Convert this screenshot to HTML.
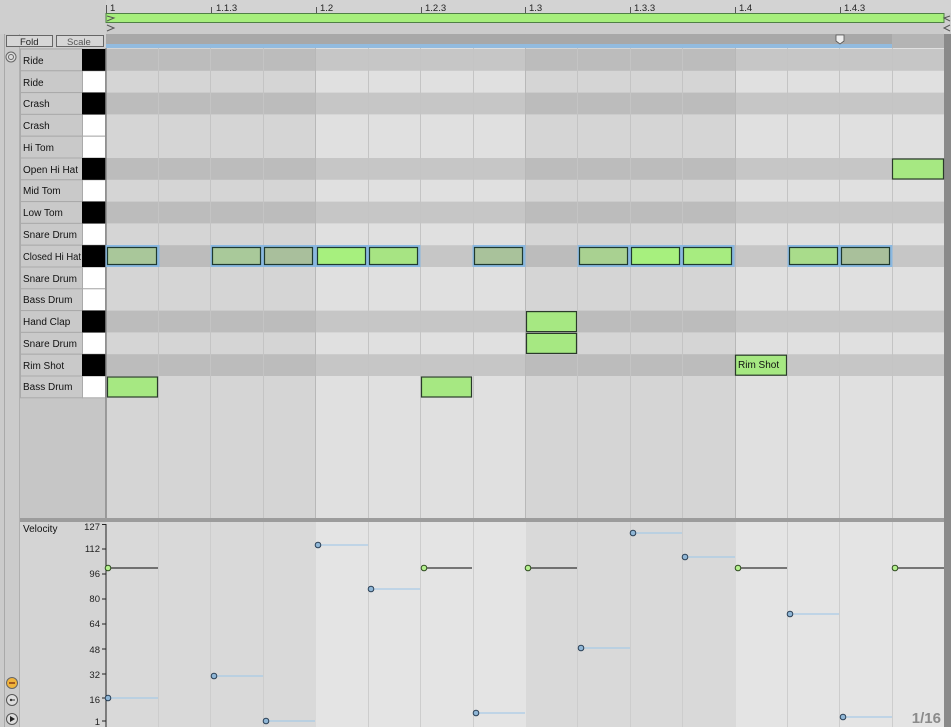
<!DOCTYPE html>
<html><head><meta charset="utf-8"><style>
html,body{margin:0;padding:0;background:#cfcfcf;}
svg{display:block;font-family:"Liberation Sans",sans-serif;}
</style></head><body>
<svg width="951" height="727" viewBox="0 0 951 727" xmlns="http://www.w3.org/2000/svg">
<rect x="0" y="0" width="951" height="727" fill="#cfcfcf"/>
<rect x="0" y="34" width="20" height="693" fill="#cbcbcb"/>
<line x1="4.5" y1="34" x2="4.5" y2="727" stroke="#a9a9a9"/>
<line x1="19.5" y1="34" x2="19.5" y2="727" stroke="#b0b0b0"/>
<rect x="106" y="0" width="845" height="13" fill="#d3d3d3"/>
<g fill="#222" font-size="9.5">
<text x="110" y="11">1</text><text x="216" y="11">1.1.3</text><text x="320" y="11">1.2</text>
<text x="425" y="11">1.2.3</text><text x="529" y="11">1.3</text><text x="634" y="11">1.3.3</text>
<text x="739" y="11">1.4</text><text x="844" y="11">1.4.3</text></g>
<g stroke="#555"><line x1="106.5" y1="5" x2="106.5" y2="13"/><line x1="211.5" y1="7" x2="211.5" y2="13"/><line x1="316.5" y1="7" x2="316.5" y2="13"/><line x1="421.5" y1="7" x2="421.5" y2="13"/><line x1="525.5" y1="7" x2="525.5" y2="13"/><line x1="630.5" y1="7" x2="630.5" y2="13"/><line x1="735.5" y1="7" x2="735.5" y2="13"/><line x1="840.5" y1="7" x2="840.5" y2="13"/></g>
<rect x="106" y="13.5" width="838" height="9" fill="#a6ee7c" stroke="#4f7f45"/>
<rect x="106" y="23" width="838" height="11" fill="#cbcbcb"/>
<path d="M107 16 L114 18 L107 21" fill="none" stroke="#555"/>
<path d="M107 25 L114 28 L107 31" fill="none" stroke="#555"/>
<rect x="106" y="34" width="845" height="14" fill="#a8a8a8"/>
<rect x="106" y="44" width="786" height="4" fill="#92bbdf"/>
<rect x="892" y="34" width="52" height="14" fill="#b4b4b4"/>
<path d="M836 35 h8 v6 l-4 3 l-4 -3 z" fill="#eee" stroke="#555" stroke-width="0.8"/>
<rect x="6.5" y="35.5" width="46" height="11" fill="#d6d6d6" stroke="#666"/>
<text x="20" y="45" font-size="9.5" fill="#222">Fold</text>
<rect x="56.5" y="35.5" width="47" height="11" fill="#d6d6d6" stroke="#666"/>
<text x="67" y="45" font-size="9.5" fill="#555">Scale</text>
<rect x="106" y="48" width="210" height="471" fill="#d5d5d5"/>
<rect x="316" y="48" width="210" height="471" fill="#e0e0e0"/>
<rect x="526" y="48" width="210" height="471" fill="#d5d5d5"/>
<rect x="736" y="48" width="208" height="471" fill="#e0e0e0"/>
<g fill="#000" opacity="0.11">
<rect x="106" y="49" width="838" height="21.8"/><rect x="106" y="92.6" width="838" height="21.8"/>
<rect x="106" y="158" width="838" height="21.8"/><rect x="106" y="201.6" width="838" height="21.8"/>
<rect x="106" y="245.2" width="838" height="21.8"/><rect x="106" y="310.6" width="838" height="21.8"/>
<rect x="106" y="354.2" width="838" height="21.8"/></g>
<g stroke="#c4c4c4" stroke-width="1">
<line x1="158.5" y1="48" x2="158.5" y2="519"/><line x1="210.5" y1="48" x2="210.5" y2="519"/><line x1="263.5" y1="48" x2="263.5" y2="519"/>
<line x1="368.5" y1="48" x2="368.5" y2="519"/><line x1="420.5" y1="48" x2="420.5" y2="519"/><line x1="473.5" y1="48" x2="473.5" y2="519"/>
<line x1="577.5" y1="48" x2="577.5" y2="519"/><line x1="630.5" y1="48" x2="630.5" y2="519"/><line x1="682.5" y1="48" x2="682.5" y2="519"/>
<line x1="787.5" y1="48" x2="787.5" y2="519"/><line x1="839.5" y1="48" x2="839.5" y2="519"/><line x1="892.5" y1="48" x2="892.5" y2="519"/>
</g>
<g stroke="#b8b8b8"><line x1="315.5" y1="48" x2="315.5" y2="519"/><line x1="525.5" y1="48" x2="525.5" y2="519"/><line x1="735.5" y1="48" x2="735.5" y2="519"/></g>
<rect x="944" y="34" width="7" height="693" fill="#8a8a8a"/>
<path d="M950 16 L944 18 L950 21" fill="none" stroke="#555"/>
<path d="M950 25 L944 28 L950 31" fill="none" stroke="#555"/>
<rect x="20" y="48" width="86" height="471" fill="#c6c6c6"/>
<g fill="#c9c9c9" stroke="#aaa">
<rect x="20.5" y="49" width="62" height="21.8"/><rect x="20.5" y="70.8" width="62" height="21.8"/><rect x="20.5" y="92.6" width="62" height="21.8"/><rect x="20.5" y="114.4" width="62" height="21.8"/>
<rect x="20.5" y="136.2" width="62" height="21.8"/><rect x="20.5" y="158" width="62" height="21.8"/><rect x="20.5" y="179.8" width="62" height="21.8"/><rect x="20.5" y="201.6" width="62" height="21.8"/>
<rect x="20.5" y="223.4" width="62" height="21.8"/><rect x="20.5" y="245.2" width="62" height="21.8"/><rect x="20.5" y="267" width="62" height="21.8"/><rect x="20.5" y="288.8" width="62" height="21.8"/>
<rect x="20.5" y="310.6" width="62" height="21.8"/><rect x="20.5" y="332.4" width="62" height="21.8"/><rect x="20.5" y="354.2" width="62" height="21.8"/><rect x="20.5" y="376" width="62" height="21.8"/>
</g>
<g fill="#fff" stroke="#aaa">
<rect x="82.5" y="70.8" width="23" height="21.8"/><rect x="82.5" y="114.4" width="23" height="21.8"/><rect x="82.5" y="136.2" width="23" height="21.8"/>
<rect x="82.5" y="179.8" width="23" height="21.8"/><rect x="82.5" y="223.4" width="23" height="21.8"/><rect x="82.5" y="267" width="23" height="21.8"/>
<rect x="82.5" y="288.8" width="23" height="21.8"/><rect x="82.5" y="332.4" width="23" height="21.8"/><rect x="82.5" y="376" width="23" height="21.8"/></g>
<g fill="#000">
<rect x="82" y="49" width="24" height="21.8"/><rect x="82" y="92.6" width="24" height="21.8"/><rect x="82" y="158" width="24" height="21.8"/>
<rect x="82" y="201.6" width="24" height="21.8"/><rect x="82" y="245.2" width="24" height="21.8"/><rect x="82" y="310.6" width="24" height="21.8"/><rect x="82" y="354.2" width="24" height="21.8"/></g>
<g font-size="10" fill="#111">
<text x="23" y="64">Ride</text><text x="23" y="86">Ride</text><text x="23" y="107">Crash</text><text x="23" y="129">Crash</text>
<text x="23" y="151">Hi Tom</text><text x="23" y="173">Open Hi Hat</text><text x="23" y="194">Mid Tom</text><text x="23" y="216">Low Tom</text>
<text x="23" y="238">Snare Drum</text><text x="23" y="260" textLength="58" lengthAdjust="spacingAndGlyphs">Closed Hi Hat</text><text x="23" y="282">Snare Drum</text><text x="23" y="303">Bass Drum</text>
<text x="23" y="325">Hand Clap</text><text x="23" y="347">Snare Drum</text><text x="23" y="369">Rim Shot</text><text x="23" y="390">Bass Drum</text></g>
<circle cx="11" cy="57" r="5" fill="#ddd" stroke="#666"/><circle cx="11" cy="57" r="2.5" fill="none" stroke="#666"/>
<line x1="106" y1="48" x2="106" y2="519" stroke="#888" stroke-width="1.5"/>
<g stroke="#8ab8e0" stroke-width="3" fill="none">
<rect x="107" y="246.5" width="51" height="19"/><rect x="212" y="246.5" width="50" height="19"/><rect x="264" y="246.5" width="50" height="19"/>
<rect x="317" y="246.5" width="50" height="19"/><rect x="369" y="246.5" width="50" height="19"/><rect x="474" y="246.5" width="50" height="19"/>
<rect x="579" y="246.5" width="50" height="19"/><rect x="631" y="246.5" width="50" height="19"/><rect x="683" y="246.5" width="50" height="19"/>
<rect x="789" y="246.5" width="50" height="19"/><rect x="841" y="246.5" width="50" height="19"/></g>
<g stroke="#1f3a30" stroke-width="1.2">
<rect x="107.5" y="247.5" width="49" height="17" fill="#a9c79a"/><rect x="212.5" y="247.5" width="48" height="17" fill="#a9c99a"/><rect x="264.5" y="247.5" width="48" height="17" fill="#a9bf9c"/>
<rect x="317.5" y="247.5" width="48" height="17" fill="#a7f07e"/><rect x="369.5" y="247.5" width="48" height="17" fill="#a7e483"/><rect x="474.5" y="247.5" width="48" height="17" fill="#a9c29b"/>
<rect x="579.5" y="247.5" width="48" height="17" fill="#a9d191"/><rect x="631.5" y="247.5" width="48" height="17" fill="#a7f07e"/><rect x="683.5" y="247.5" width="48" height="17" fill="#a7ec80"/>
<rect x="789.5" y="247.5" width="48" height="17" fill="#a9dc8b"/><rect x="841.5" y="247.5" width="48" height="17" fill="#a9c09b"/>
</g>
<g stroke="#2a3a2a" stroke-width="1.2" fill="#a6e882">
<rect x="892.5" y="159" width="51" height="20"/>
<rect x="526.5" y="311.6" width="50" height="20"/><rect x="526.5" y="333.4" width="50" height="20"/>
<rect x="735.5" y="355.2" width="51" height="20"/>
<rect x="107.5" y="377" width="50" height="20"/><rect x="421.5" y="377" width="50" height="20"/></g>
<text x="738" y="368" font-size="10" fill="#111">Rim Shot</text>
<rect x="20" y="518" width="924" height="4" fill="#9c9c9c"/>
<rect x="20" y="522" width="86" height="205" fill="#d4d4d4"/>
<rect x="106" y="522" width="210" height="205" fill="#d9d9d9"/>
<rect x="316" y="522" width="210" height="205" fill="#e4e4e4"/>
<rect x="526" y="522" width="210" height="205" fill="#d9d9d9"/>
<rect x="736" y="522" width="208" height="205" fill="#e4e4e4"/>
<g stroke="#cdcdcd">
<line x1="158.5" y1="522" x2="158.5" y2="727"/><line x1="210.5" y1="522" x2="210.5" y2="727"/><line x1="263.5" y1="522" x2="263.5" y2="727"/>
<line x1="368.5" y1="522" x2="368.5" y2="727"/><line x1="420.5" y1="522" x2="420.5" y2="727"/><line x1="473.5" y1="522" x2="473.5" y2="727"/>
<line x1="577.5" y1="522" x2="577.5" y2="727"/><line x1="630.5" y1="522" x2="630.5" y2="727"/><line x1="682.5" y1="522" x2="682.5" y2="727"/>
<line x1="787.5" y1="522" x2="787.5" y2="727"/><line x1="839.5" y1="522" x2="839.5" y2="727"/><line x1="892.5" y1="522" x2="892.5" y2="727"/></g>
<text x="23" y="532" font-size="10" fill="#111">Velocity</text>
<g font-size="9.5" fill="#222" text-anchor="end">
<text x="100" y="530">127</text><text x="100" y="552">112</text><text x="100" y="577">96</text><text x="100" y="602">80</text>
<text x="100" y="627">64</text><text x="100" y="653">48</text><text x="100" y="678">32</text><text x="100" y="703">16</text><text x="100" y="725">1</text></g>
<line x1="106" y1="524" x2="106" y2="727" stroke="#222"/>
<g stroke="#222">
<line x1="102" y1="524.5" x2="106" y2="524.5"/><line x1="102" y1="549" x2="106" y2="549"/><line x1="102" y1="574" x2="106" y2="574"/><line x1="102" y1="599" x2="106" y2="599"/>
<line x1="102" y1="624" x2="106" y2="624"/><line x1="102" y1="649" x2="106" y2="649"/><line x1="102" y1="674" x2="106" y2="674"/><line x1="102" y1="698" x2="106" y2="698"/><line x1="102" y1="721" x2="106" y2="721"/></g>
<g stroke="#a9cbe6" stroke-width="1.2">
<line x1="108" y1="698" x2="158" y2="698"/><line x1="214" y1="676" x2="263" y2="676"/><line x1="266" y1="721" x2="315" y2="721"/>
<line x1="318" y1="545" x2="368" y2="545"/><line x1="371" y1="589" x2="420" y2="589"/><line x1="476" y1="713" x2="525" y2="713"/>
<line x1="581" y1="648" x2="630" y2="648"/><line x1="633" y1="533" x2="682" y2="533"/><line x1="685" y1="557" x2="735" y2="557"/>
<line x1="790" y1="614" x2="839" y2="614"/><line x1="843" y1="717" x2="892" y2="717"/></g>
<g stroke="#333" stroke-width="1.2">
<line x1="108" y1="568" x2="158" y2="568"/><line x1="424" y1="568" x2="472" y2="568"/><line x1="528" y1="568" x2="577" y2="568"/>
<line x1="738" y1="568" x2="787" y2="568"/><line x1="895" y1="568" x2="944" y2="568"/></g>
<g fill="#8fb6d6" stroke="#2a3f55" stroke-width="1">
<circle cx="108" cy="698" r="2.8"/><circle cx="214" cy="676" r="2.8"/><circle cx="266" cy="721" r="2.8"/><circle cx="318" cy="545" r="2.8"/>
<circle cx="371" cy="589" r="2.8"/><circle cx="476" cy="713" r="2.8"/><circle cx="581" cy="648" r="2.8"/><circle cx="633" cy="533" r="2.8"/>
<circle cx="685" cy="557" r="2.8"/><circle cx="790" cy="614" r="2.8"/><circle cx="843" cy="717" r="2.8"/></g>
<g fill="#b4f08e" stroke="#2f4a20" stroke-width="1">
<circle cx="108" cy="568" r="2.8"/><circle cx="424" cy="568" r="2.8"/><circle cx="528" cy="568" r="2.8"/><circle cx="738" cy="568" r="2.8"/><circle cx="895" cy="568" r="2.8"/></g>
<text x="941" y="723" font-size="15" font-weight="bold" fill="#8a8a8a" text-anchor="end">1/16</text>
<circle cx="12" cy="683" r="5.5" fill="#f0b43c" stroke="#666"/><line x1="9" y1="683" x2="15" y2="683" stroke="#7a2a10" stroke-width="1.3"/>
<circle cx="12" cy="700" r="5.5" fill="#ddd" stroke="#555"/><circle cx="11" cy="700" r="1.2" fill="#333"/><line x1="12" y1="700" x2="15" y2="700" stroke="#333"/>
<circle cx="12" cy="719" r="5.5" fill="#ddd" stroke="#555"/><path d="M10 716 L15 719 L10 722 Z" fill="#222"/>
</svg>
</body></html>
